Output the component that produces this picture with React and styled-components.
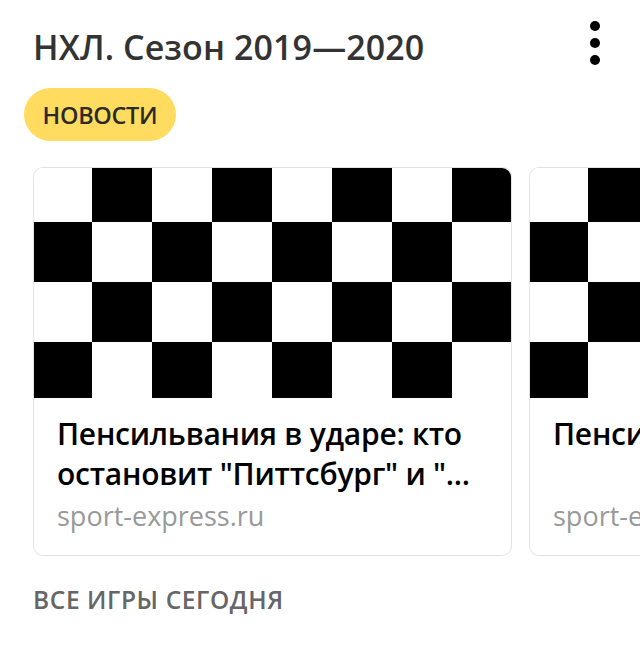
import React from "react";
import styled, { createGlobalStyle } from "styled-components";

const Global = createGlobalStyle`
  html, body { margin: 0; padding: 0; background: #fff; }
  body { font-family: "Open Sans", "Noto Sans", sans-serif; -webkit-font-smoothing: antialiased; }
`;

const Page = styled.div`
  width: 640px;
  height: 646px;
  overflow: hidden;
  background: #fff;
`;

const Header = styled.header`
  display: flex;
  align-items: flex-start;
  justify-content: space-between;
  padding: 21px 39px 0 33px;
  height: 52px;
`;

const Title = styled.h1`
  margin: 0;
  font-size: 34px;
  font-weight: 600;
  color: #333;
  letter-spacing: 0.1px;
  line-height: 52px;
`;

const MenuButton = styled.button`
  border: 0;
  background: none;
  padding: 0;
  width: 12px;
  display: flex;
  flex-direction: column;
  align-items: center;
  gap: 7px;
  cursor: pointer;
`;

const Dot = styled.span`
  width: 10px;
  height: 10px;
  border-radius: 50%;
  background: #000;
`;

const Chip = styled.div`
  margin: 15px 0 0 24px;
  width: 152px;
  height: 53px;
  border-radius: 27px;
  background: #ffdc60;
  display: flex;
  align-items: center;
  justify-content: center;
  font-size: 23.5px;
  font-weight: 600;
  color: #2a2a2a;
  letter-spacing: -0.3px;
`;

const Carousel = styled.div`
  margin-top: 26px;
  display: flex;
  gap: 17px;
  padding-left: 33px;
`;

const Card = styled.article`
  flex: 0 0 479px;
  height: 389px;
  box-sizing: border-box;
  border: 1px solid #e3e3e3;
  border-radius: 10px;
  overflow: hidden;
  display: flex;
  flex-direction: column;
  background: #fff;
`;

const Picture = styled.div`
  height: 230px;
  flex: 0 0 230px;
  background: repeating-conic-gradient(#000 0 25%, #fff 0 50%);
  background-size: 120px 120px;
  background-position: -2px -6px;
`;

const Body = styled.div`
  padding: 16px 20px 0 23px;
`;

const Headline = styled.h2`
  margin: 0;
  min-height: 80px;
  font-size: 30px;
  font-weight: 600;
  line-height: 40px;
  color: #000;
  letter-spacing: -0.25px;
  white-space: pre-line;
`;

const Source = styled.div`
  margin-top: 2px;
  font-size: 27px;
  line-height: 40px;
  color: #999;
  white-space: nowrap;
`;

const Footer = styled.div`
  margin: 29px 0 0 33px;
  font-size: 24.5px;
  line-height: 30px;
  font-weight: 600;
  color: #666;
  letter-spacing: 0.6px;
`;

const news = [
  { title: "Пенсильвания в ударе: кто\nостановит \"Питтсбург\" и \"...", source: "sport-express.ru" },
  { title: "Пенсильвания выиграла", source: "sport-express.ru" },
];

export default function App() {
  return (
    <Page>
      <Global />
      <Header>
        <Title>НХЛ. Сезон 2019—2020</Title>
        <MenuButton aria-label="Меню">
          <Dot />
          <Dot />
          <Dot />
        </MenuButton>
      </Header>
      <Chip>НОВОСТИ</Chip>
      <Carousel>
        {news.map((n, i) => (
          <Card key={i}>
            <Picture />
            <Body>
              <Headline>{n.title}</Headline>
              <Source>{n.source}</Source>
            </Body>
          </Card>
        ))}
      </Carousel>
      <Footer>ВСЕ ИГРЫ СЕГОДНЯ</Footer>
    </Page>
  );
}
